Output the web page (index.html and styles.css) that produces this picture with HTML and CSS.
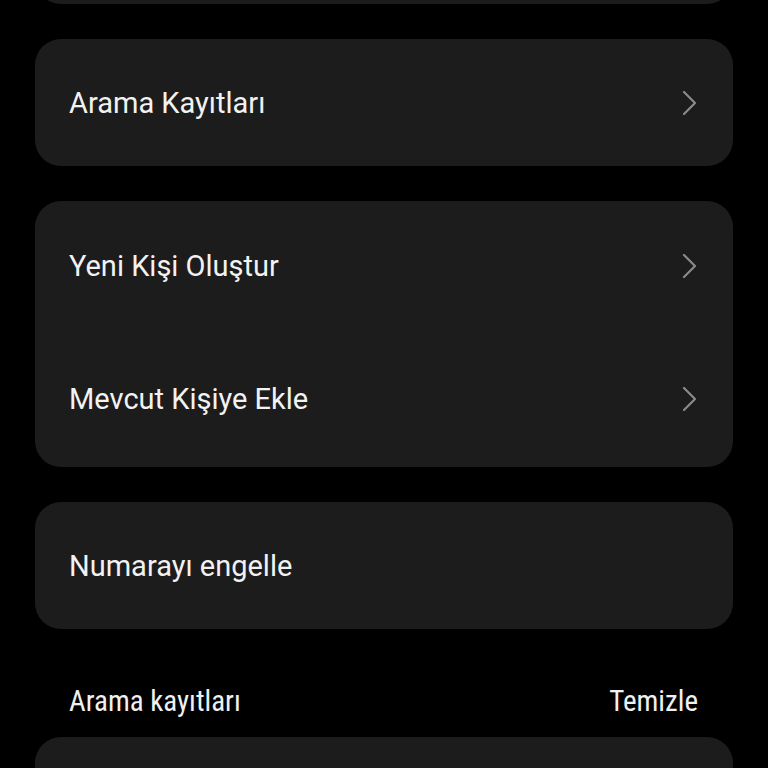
FILE: index.html
```html
<!DOCTYPE html>
<html lang="tr">
<head>
<meta charset="utf-8">
<link rel="stylesheet" href="styles.css">
</head>
<body>
<div class="page">
  <div class="card card-top"></div>
  <div class="card">
    <div class="row"><span class="label">Arama Kayıtları</span><svg class="chev" viewBox="0 0 16 26"><path d="M2 2 L13 13 L2 24"/></svg></div>
  </div>
  <div class="card">
    <div class="row tall"><span class="label">Yeni Kişi Oluştur</span><svg class="chev" viewBox="0 0 16 26"><path d="M2 2 L13 13 L2 24"/></svg></div>
    <div class="row tall"><span class="label">Mevcut Kişiye Ekle</span><svg class="chev" viewBox="0 0 16 26"><path d="M2 2 L13 13 L2 24"/></svg></div>
  </div>
  <div class="card">
    <div class="row"><span class="label">Numarayı engelle</span></div>
  </div>
  <div class="section">
    <div class="section-head">
      <span>Arama kayıtları</span>
      <span>Temizle</span>
    </div>
    <div class="card card-bottom"></div>
  </div>
</div>
</body>
</html>
```
FILE: styles.css
```css
html, body {
  margin: 0;
  padding: 0;
  background: #000;
}
body {
  width: 768px;
  height: 768px;
  overflow: hidden;
  font-family: Roboto, "Noto Sans", sans-serif;
  color: #f2f2f2;
}
.page {
  display: flex;
  flex-direction: column;
  gap: 35px;
  padding: 0 35px;
}
.card {
  background: #1c1c1c;
  border-radius: 26px;
  display: flex;
  flex-direction: column;
}
.card-top {
  height: 127px;
  margin-top: -123px;
}
.row {
  height: 127px;
  display: flex;
  align-items: center;
  justify-content: space-between;
  padding: 0 35px 0 34px;
  box-sizing: border-box;
}
.row.tall {
  height: 133px;
  padding-bottom: 4px;
}
.label {
  font-size: 29px;
  letter-spacing: 0;
}
.chev {
  width: 16px;
  height: 26px;
  fill: none;
  stroke: #8a8a8a;
  stroke-width: 2.2;
  stroke-linecap: round;
  stroke-linejoin: round;
}
.section {
  display: flex;
  flex-direction: column;
}
.section-head {
  display: flex;
  justify-content: space-between;
  align-items: center;
  height: 73px;
  padding: 0 35px 0 34px;
  font-size: 29px;
  color: #f0f0f0;
  font-family: "Roboto Condensed", Roboto, sans-serif;
  font-stretch: condensed;
}
.card-bottom {
  height: 127px;
}
```
